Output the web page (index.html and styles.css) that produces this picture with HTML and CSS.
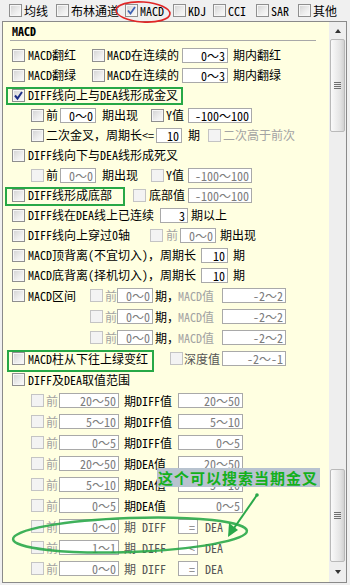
FILE: index.html
```html
<!DOCTYPE html>
<html lang="zh-CN">
<head>
    <meta charset="UTF-8">
    <meta name="viewport" content="width=device-width, initial-scale=1.0">
    <title>MACD 条件</title>
    <link rel="stylesheet" href="styles.css">
</head>
<body>
    <div class="topbar">
        <label class="tab"><span class="cb"></span>均线</label>
        <label class="tab"><span class="cb"></span>布林通道</label>
        <label class="tab"><span class="cb on"><svg viewBox="0 0 11 11"><path d="M2 5.5 L4.5 8.5 L9 2" /></svg></span>MACD</label>
        <label class="tab"><span class="cb"></span>KDJ</label>
        <label class="tab"><span class="cb"></span>CCI</label>
        <label class="tab"><span class="cb"></span>SAR</label>
        <label class="tab"><span class="cb"></span>其他</label>
    </div>

    <div class="panel">
        <div class="content">
            <div class="title">MACD</div>

            <div class="row ra">
                <span class="cb"></span><span>MACD翻红</span>
                <span class="cb"></span><span>MACD在连续的</span>
                <input class="field w46" value="0～3"><span>期内翻红</span>
            </div>
            <div class="row ra">
                <span class="cb"></span><span>MACD翻绿</span>
                <span class="cb"></span><span>MACD在连续的</span>
                <input class="field w46" value="0～3"><span>期内翻绿</span>
            </div>
            <div class="row rs">
                <span class="cb on dark"><svg viewBox="0 0 11 11"><path d="M2 5.5 L4.5 8.5 L9 2" /></svg></span><span>DIFF线向上与DEA线形成金叉</span>
            </div>
            <div class="row rb">
                <span class="cb"></span><span>前</span>
                <input class="field w36" value="0～0"><span>期出现</span>
                <span class="cb"></span><span>Y值</span>
                <input class="field w64" value="-100～100">
            </div>
            <div class="row rc">
                <span class="cb"></span><span>二次金叉，周期长&lt;=</span>
                <input class="field w26" value="10"><span>期</span>
                <span class="cb off"></span><span class="gray">二次高于前次</span>
            </div>
            <div class="row rs">
                <span class="cb"></span><span>DIFF线向下与DEA线形成死叉</span>
            </div>
            <div class="row rb">
                <span class="cb off"></span><span>前</span>
                <input class="field w36 dim" value="0～0"><span>期出现</span>
                <span class="cb off"></span><span>Y值</span>
                <input class="field w64 dim" value="-100～100">
            </div>
            <div class="row rd">
                <span class="cb"></span><span>DIFF线形成底部</span>
                <span class="cb off"></span><span>底部值</span>
                <input class="field w64 dim" value="-100～100">
            </div>
            <div class="row re">
                <span class="cb"></span><span>DIFF线在DEA线上已连续</span>
                <input class="field w28" value="3"><span>期以上</span>
            </div>
            <div class="row rf">
                <span class="cb"></span><span>DIFF线向上穿过0轴</span>
                <span class="cb off"></span><span class="gray">前</span>
                <input class="field w36 dim" value="0～0"><span>期出现</span>
            </div>
            <div class="row rg">
                <span class="cb"></span><span>MACD顶背离(不宜切入)，周期长</span>
                <input class="field w27" value="10"><span>期</span>
            </div>
            <div class="row rg">
                <span class="cb"></span><span>MACD底背离(择机切入)，周期长</span>
                <input class="field w27" value="10"><span>期</span>
            </div>

            <div class="row rh tall">
                <span class="cb"></span><span>MACD区间</span>
                <span class="cb off"></span><span class="gray">前</span>
                <input class="field w36 dim" value="0～0"><span>期，</span>
                <span class="gray">MACD值</span><input class="field w64 dim" value="-2～2">
            </div>
            <div class="row ri tall">
                <span class="cb off"></span><span class="gray">前</span>
                <input class="field w36 dim" value="0～0"><span>期，</span>
                <span class="gray">MACD值</span><input class="field w64 dim" value="-2～2">
            </div>
            <div class="row ri tall">
                <span class="cb off"></span><span class="gray">前</span>
                <input class="field w36 dim" value="0～0"><span>期，</span>
                <span class="gray">MACD值</span><input class="field w64 dim" value="-2～2">
            </div>
            <div class="row rj tall">
                <span class="cb"></span><span>MACD柱从下往上绿变红</span>
                <span class="cb off"></span><span class="soft">深度值</span>
                <input class="field w64 dim" value="-2～-1">
            </div>
            <div class="row rs tall">
                <span class="cb"></span><span>DIFF及DEA取值范围</span>
            </div>
            <div class="row rk tall">
                <span class="cb off"></span><span class="gray">前</span>
                <input class="field w60 dim" value="20～50"><span>期DIFF值</span>
                <input class="field w65 dim" value="20～50">
            </div>
            <div class="row rk tall">
                <span class="cb off"></span><span class="gray">前</span>
                <input class="field w60 dim" value="5～10"><span>期DIFF值</span>
                <input class="field w65 dim" value="5～10">
            </div>
            <div class="row rk tall">
                <span class="cb off"></span><span class="gray">前</span>
                <input class="field w60 dim" value="0～5"><span>期DIFF值</span>
                <input class="field w65 dim" value="0～5">
            </div>
            <div class="row rk tall">
                <span class="cb off"></span><span class="gray">前</span>
                <input class="field w60 dim" value="20～50"><span>期DEA值</span>
                <input class="field w65 dim" value="20～50">
            </div>
            <div class="row rk tall">
                <span class="cb off"></span><span class="gray">前</span>
                <input class="field w60 dim" value="5～10"><span>期DEA值</span>
                <input class="field w65 dim" value="5～10">
            </div>
            <div class="row rk tall">
                <span class="cb off"></span><span class="gray">前</span>
                <input class="field w60 dim" value="0～5"><span>期DEA值</span>
                <input class="field w65 dim" value="0～5">
            </div>
            <div class="row rl tall">
                <span class="cb off"></span><span class="gray">前</span>
                <input class="field w60 dim" value="0～0"><span class="soft">期 DIFF</span>
                <input class="field w20 dim" value="="><span class="soft">DEA</span>
            </div>
            <div class="row rl tall">
                <span class="cb off"></span><span class="gray">前</span>
                <input class="field w60 dim" value="1～1"><span class="soft">期 DIFF</span>
                <input class="field w20 dim" value="&lt;"><span class="soft">DEA</span>
            </div>
            <div class="row rl tall">
                <span class="cb off"></span><span class="gray">前</span>
                <input class="field w60 dim" value="0～0"><span class="soft">期 DIFF</span>
                <input class="field w20 dim" value="="><span class="soft">DEA</span>
            </div>
        </div>

        <div class="scroll">
            <div class="arrow up"></div>
            <div class="thumb"><span class="grip"></span></div>
            <div class="track"></div>
            <div class="thumb"><span class="grip"></span></div>
            <div class="arrow down"></div>
        </div>
    </div>

    <!-- hand-drawn notes over the screenshot -->
    <svg class="marks" width="350" height="585" viewBox="0 0 350 585">
        <ellipse cx="143" cy="12" rx="27" ry="10" transform="rotate(4 143 12)" fill="none" stroke="#e02626" stroke-width="1.6" />
        <rect x="7" y="88" width="175" height="16" fill="none" stroke="#27a846" stroke-width="2" />
        <rect x="6" y="188" width="118" height="17" fill="none" stroke="#27a846" stroke-width="2" />
        <rect x="8" y="351" width="145" height="20" fill="none" stroke="#27a846" stroke-width="2" />
        <ellipse cx="130" cy="535" rx="117" ry="17" transform="rotate(-2 130 535)" fill="none" stroke="#2aa84a" stroke-width="2.5" opacity="0.9" />
        <line x1="257" y1="495" x2="232" y2="531" stroke="#2aa84a" stroke-width="2" />
        <circle cx="257" cy="495" r="1.8" fill="#2aa84a" />
        <polygon points="228,537 229,523 238,530" fill="#2aa84a" />
    </svg>
    <div class="note">这个可以搜索当期金叉</div>
</body>
</html>
```

FILE: styles.css
```css
body {
    margin: 0;
    width: 350px;
    height: 585px;
    background-color: #f0f0f0;
    font-family: "Noto Sans Mono CJK SC", "Noto Sans CJK SC", sans-serif;
    font-size: 12px;
    color: #000;
    position: relative;
    overflow: hidden;
}
.topbar {
    display: grid;
    grid-template-columns: 47px 69px 48px 40px 43px 42px auto;
    align-items: center;
    height: 21px;
    padding-left: 9px;
    white-space: nowrap;
}
.tab {
    display: flex;
    align-items: center;
    gap: 2px;
    line-height: 14px;
}
.cb {
    display: block;
    width: 13px;
    height: 13px;
    box-sizing: border-box;
    border: 1px solid #8f8f8f;
    background: linear-gradient(135deg, #d2d2d2 0%, #eeeeee 60%, #fbfbfb 100%);
    box-shadow: inset 0 0 0 1px #f6f6f6;
}
.cb.off {
    border-color: #c4c4c4;
    background: #f3f3f3;
    box-shadow: none;
}
.cb svg {
    display: block;
    width: 11px;
    height: 11px;
}
.cb svg path {
    fill: none;
    stroke: #3f62b4;
    stroke-width: 1.8;
}
.cb.dark svg path {
    stroke: #1d2f86;
    stroke-width: 2;
}
.panel {
    display: flex;
    margin-left: 2px;
    width: 345px;
    height: 562px;
    box-sizing: border-box;
    border: 1px solid #8a8a8a;
    background-color: #ffffe1;
}
.content {
    flex: 1;
}
.title {
    height: 18px;
    line-height: 18px;
    margin: 0 13px 4px 7px;
    padding-left: 2px;
    font-weight: bold;
    border-bottom: 1px solid #a8a8a8;
}
.row {
    display: grid;
    align-items: center;
    height: 20px;
    padding-left: 9px;
    white-space: nowrap;
    line-height: 14px;
}
.row.tall {
    height: 21px;
}
.ra { grid-template-columns: 16px 64px 15px 75px 51px 1fr; }
.rb { padding-left: 28px; grid-template-columns: 15px 14px 42px 49px 15px 22px 1fr; }
.rc { padding-left: 28px; grid-template-columns: 15px 110px 32px 20px 15px 1fr; }
.rs { grid-template-columns: 16px 1fr; }
.rd { grid-template-columns: 16px 105px 16px 39px 1fr; }
.re { grid-template-columns: 16px 132px 31px 1fr; }
.rf { grid-template-columns: 16px 122px 16px 14px 40px 1fr; }
.rg { grid-template-columns: 16px 173px 32px 1fr; }
.rh { grid-template-columns: 16px 62px 15px 12px 38px 23px 44px 1fr; }
.ri { padding-left: 87px; grid-template-columns: 15px 12px 38px 23px 44px 1fr; }
.rj { grid-template-columns: 16px 142px 14px 38px 1fr; }
.rk { padding-left: 28px; grid-template-columns: 15px 13px 65px 54px 1fr; }
.rl { padding-left: 28px; grid-template-columns: 15px 13px 65px 54px 27px 1fr; }
.gray {
    color: #a3a3a3;
}
.soft {
    color: #555;
}
.field {
    height: 15px;
    box-sizing: border-box;
    border: 1px solid #a9a9a9;
    background: #fff;
    font: inherit;
    line-height: 13px;
    color: #000;
    text-align: right;
    padding: 0 2px 0 0;
    margin: 0;
    outline: none;
}
.field.dim {
    color: #7c7c7c;
}
.w20 { width: 20px; }
.w26 { width: 26px; }
.w27 { width: 27px; }
.w28 { width: 28px; }
.w36 { width: 36px; }
.w46 { width: 46px; }
.w60 { width: 60px; }
.w64 { width: 64px; }
.w65 { width: 65px; }
.scroll {
    width: 17px;
    display: flex;
    flex-direction: column;
    background-color: #eeeeee;
}
.arrow {
    display: flex;
    justify-content: center;
    align-items: center;
}
.arrow.up {
    height: 17px;
}
.arrow.down {
    height: 20px;
}
.arrow::after {
    content: "";
    border-left: 3px solid transparent;
    border-right: 3px solid transparent;
}
.arrow.up::after {
    border-bottom: 4px solid #333;
}
.arrow.down::after {
    border-top: 4px solid #333;
}
.thumb {
    height: 93px;
    margin: 0 1px;
    box-sizing: border-box;
    border: 1px solid #b9b9b9;
    border-radius: 2px;
    background: linear-gradient(to right, #fafafa, #e4e4e4 70%, #d2d2d2);
    display: flex;
    justify-content: center;
    align-items: center;
}
.grip {
    width: 7px;
    height: 7px;
    background: repeating-linear-gradient(#6f6f6f 0 1px, transparent 1px 2px);
}
.track {
    flex: 1;
}
.marks {
    position: absolute;
    left: 0;
    top: 0;
    pointer-events: none;
}
.note {
    position: absolute;
    left: 157px;
    top: 468px;
    width: 163px;
    height: 19px;
    line-height: 19px;
    padding-left: 1px;
    box-sizing: border-box;
    background-color: #b8c3cf;
    color: #14b01c;
    font-family: "Noto Sans CJK SC", sans-serif;
    font-size: 15px;
    font-weight: bold;
    letter-spacing: 1px;
    white-space: nowrap;
}
```
